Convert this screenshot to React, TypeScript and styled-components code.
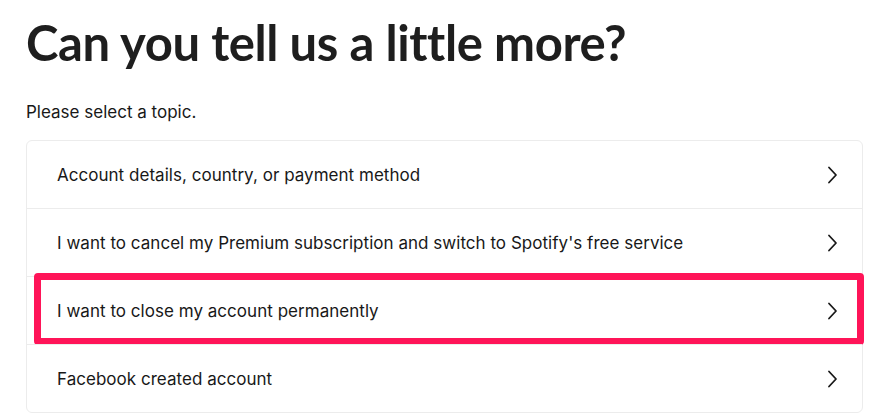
import React from 'react';
import styled, { createGlobalStyle } from 'styled-components';

const GlobalStyle = createGlobalStyle`
  html, body {
    margin: 0;
    padding: 0;
    background: #ffffff;
  }
  body {
    font-family: Inter, "Liberation Sans", sans-serif;
    color: #181818;
    overflow: hidden;
  }
`;

const Page = styled.div`
  padding: 0 15px 0 26px;
`;

const Heading = styled.h1`
  font-family: Lato, "Liberation Sans", sans-serif;
  font-size: 49px;
  font-weight: 700;
  letter-spacing: -0.4px;
  line-height: 62px;
  margin: 11px 0 0 0;
  color: #1e1e1e;
`;

const Intro = styled.p`
  font-size: 17px;
  line-height: 24px;
  margin: 27px 0 16px 0;
  color: #181818;
`;

const TopicList = styled.div`
  border: 1px solid #ececec;
  border-radius: 6px;
  display: flex;
  flex-direction: column;
`;

const TopicRow = styled.div`
  position: relative;
  display: flex;
  align-items: center;
  justify-content: space-between;
  height: 67px;
  padding: 0 24px 0 30px;
  font-size: 17px;
  letter-spacing: 0.03px;
  color: #181818;
  & + & {
    border-top: 1px solid #ececec;
  }
`;

const Highlight = styled.div`
  position: absolute;
  left: 7px;
  right: -2px;
  top: -4px;
  bottom: -1px;
  border: 7px solid #ff1458;
  border-radius: 4px;
  pointer-events: none;
`;

const Chevron = () => (
  <svg width="11" height="18" viewBox="0 0 11 18" fill="none">
    <path d="M2 1.5 L9 9 L2 16.5" stroke="#181818" strokeWidth="1.8" strokeLinecap="round" strokeLinejoin="round" />
  </svg>
);

const topics = [
  'Account details, country, or payment method',
  "I want to cancel my Premium subscription and switch to Spotify's free service",
  'I want to close my account permanently',
  'Facebook created account',
];

const App = () => (
  <Page>
    <GlobalStyle />
    <Heading>Can you tell us a little more?</Heading>
    <Intro>Please select a topic.</Intro>
    <TopicList>
      {topics.map((t, i) => (
        <TopicRow key={t}>
          <span>{t}</span>
          <Chevron />
          {i === 2 && <Highlight />}
        </TopicRow>
      ))}
    </TopicList>
  </Page>
);

export default App;
